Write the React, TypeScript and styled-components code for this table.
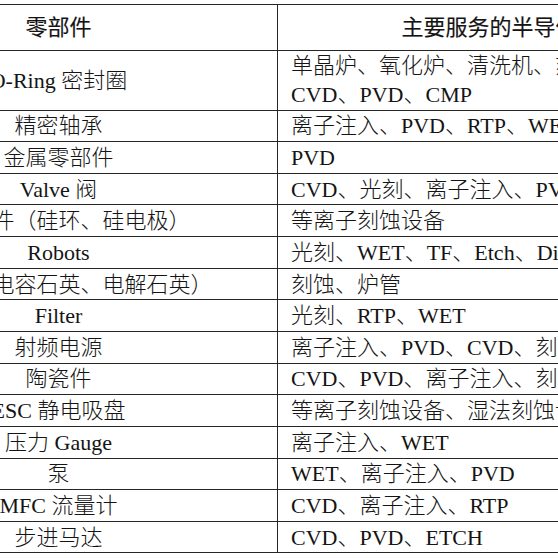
import styled, { createGlobalStyle } from "styled-components";

const GlobalStyle = createGlobalStyle`
  html, body {
    margin: 0;
    padding: 0;
    background: #ffffff;
  }
`;

const Viewport = styled.div`
  width: 558px;
  height: 558px;
  overflow: hidden;
  background: #ffffff;
  padding-top: 4px;
  box-sizing: border-box;
`;

const Table = styled.table`
  border-collapse: collapse;
  margin-left: -161px;
  table-layout: fixed;
  width: 906px;
  font-family: "Liberation Serif", "Noto Sans CJK SC", serif;
  font-size: 22px;
  color: #141414;
`;

const Row = styled.tr<{ $h: number }>`
  height: ${(p) => p.$h}px;
`;

const Cell = styled.td<{ $align?: "left" | "center" }>`
  border: 1.5px solid #262626;
  padding: 0 0 0 ${(p) => (p.$align === "center" ? 0 : 13)}px;
  text-align: ${(p) => p.$align ?? "left"};
  vertical-align: middle;
  white-space: nowrap;
  line-height: 29px;
  font-weight: 300;
  overflow: hidden;
`;

const HeadCell = styled(Cell)`
  font-weight: 400;
  padding: 0;
  text-align: center;
  -webkit-text-stroke: 0.15px #141414;
`;

const rows: { part: string; use: string[]; h?: number }[] = [
  { part: "O-Ring 密封圈", use: ["单晶炉、氧化炉、清洗机、刻蚀机", "CVD、PVD、CMP"], h: 60 },
  { part: "精密轴承", use: ["离子注入、PVD、RTP、WET"] },
  { part: "金属零部件", use: ["PVD"] },
  { part: "Valve 阀", use: ["CVD、光刻、离子注入、PVD"] },
  { part: "硅零部件（硅环、硅电极）", use: ["等离子刻蚀设备"] },
  { part: "Robots", use: ["光刻、WET、TF、Etch、Diff"] },
  { part: "石英件（电容石英、电解石英）", use: ["刻蚀、炉管"] },
  { part: "Filter", use: ["光刻、RTP、WET"] },
  { part: "射频电源", use: ["离子注入、PVD、CVD、刻蚀"] },
  { part: "陶瓷件", use: ["CVD、PVD、离子注入、刻蚀"] },
  { part: "ESC 静电吸盘", use: ["等离子刻蚀设备、湿法刻蚀设备"] },
  { part: "压力 Gauge", use: ["离子注入、WET"] },
  { part: "泵", use: ["WET、离子注入、PVD"] },
  { part: "MFC 流量计", use: ["CVD、离子注入、RTP"] },
  { part: "步进马达", use: ["CVD、PVD、ETCH"] },
];

export default function App() {
  return (
    <>
      <GlobalStyle />
      <Viewport>
        <Table>
          <colgroup>
            <col style={{ width: 438 }} />
            <col style={{ width: 468 }} />
          </colgroup>
          <tbody>
            <Row $h={45.5}>
              <HeadCell>零部件</HeadCell>
              <HeadCell>主要服务的半导体设备</HeadCell>
            </Row>
            {rows.map((r) => (
              <Row key={r.part} $h={r.h ?? 31.65}>
                <Cell $align="center">{r.part}</Cell>
                <Cell>
                  {r.use.map((line, i) => (
                    <div key={i}>{line}</div>
                  ))}
                </Cell>
              </Row>
            ))}
          </tbody>
        </Table>
      </Viewport>
    </>
  );
}
